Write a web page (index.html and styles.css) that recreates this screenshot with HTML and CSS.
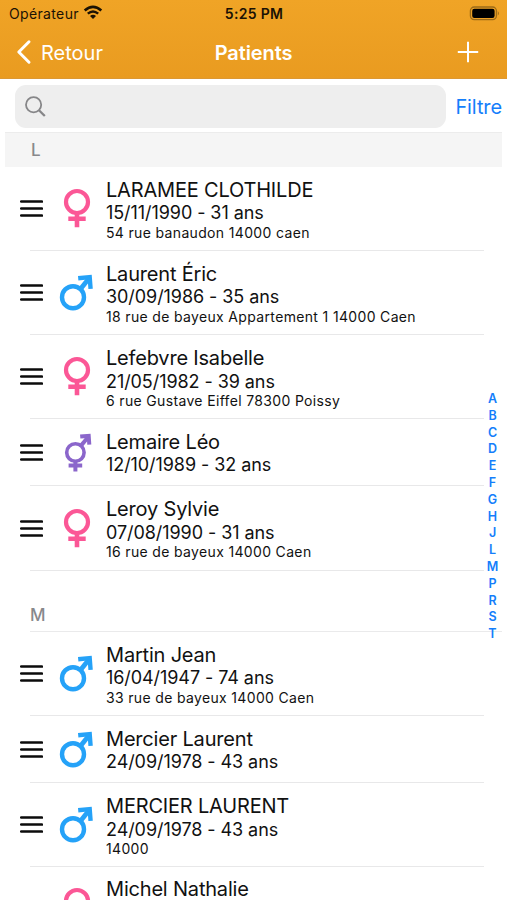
FILE: index.html
```
<!DOCTYPE html>
<html lang="fr">
<head>
<meta charset="utf-8">
<title>Patients</title>
<link rel="stylesheet" href="styles.css">
</head>
<body>
<svg class="symbols" width="0" height="0" aria-hidden="true">
  <symbol id="menu" viewBox="0 0 24 18"><path d="M2.2 1.6H23M2.2 8.6H23M2.2 15.6H23" stroke="#0b0b0b" stroke-width="2.5" stroke-linecap="round"/></symbol>
  <symbol id="female" viewBox="0 0 38 42" fill="none" stroke="#fb5796"><circle cx="19" cy="14" r="11" stroke-width="4.2"/><path d="M19 25V39.2M10.3 30.8H27.7" stroke-width="4.6"/></symbol>
  <symbol id="male" viewBox="0 0 38 42" fill="none" stroke="#25a2f8"><circle cx="15" cy="25.2" r="11" stroke-width="4.4"/><path d="M22.5 17L30.5 7" stroke-width="4.8"/><path d="M20.2 6.2L31.7 5.1L32.6 16.8" stroke-width="4.4"/></symbol>
  <symbol id="mixed" viewBox="0 0 38 42" fill="none" stroke="#8b66cb"><circle cx="17.4" cy="20.5" r="8.7" stroke-width="3.6"/><path d="M23 13.6L30 5.2M17.4 29.5V39.5M10.6 33.6H24.2" stroke-width="4"/><path d="M22.2 4.6L30.7 3.9L31.3 12.6" stroke-width="4"/></symbol>
</svg>
<header class="top">
  <div class="status">
    <div class="carrier"><span>Opérateur</span>
      <svg width="20" height="15" viewBox="0 0 20 15" fill="none" stroke="#1b1204"><path d="M1.7 5.5Q10 -1.9 18.3 5.5" stroke-width="2.6"/><path d="M4.8 8.7Q10 4.1 15.2 8.7" stroke-width="2.4"/><path d="M7 11.1Q10 8.4 13 11.1L10 14Z" fill="#1b1204" stroke="none"/></svg>
    </div>
    <span class="clock">5:25 PM</span>
    <svg class="battery" width="31" height="15" viewBox="0 0 31 15"><rect x="1.4" y="1" width="26" height="12.6" rx="3.8" fill="none" stroke="#9c6b18" stroke-width="1.3"/><rect x="3.2" y="2.7" width="22.4" height="9.2" rx="2.2"/><path d="M28.8 5Q31 7.3 28.8 9.6Z" fill="#9c6b18"/></svg>
  </div>
  <nav class="nav">
    <a class="back"><svg width="16" height="26" viewBox="0 0 16 26"><path d="M13 2.8L2.8 13L13 23.2" fill="none" stroke="#fff" stroke-width="3" stroke-linecap="round" stroke-linejoin="round"/></svg><span>Retour</span></a>
    <h1>Patients</h1>
    <svg class="add" width="22" height="22" viewBox="0 0 22 22"><path d="M11 .8V21.2M.8 11H21.2" stroke="#fff" stroke-width="2"/></svg>
  </nav>
</header>
<div class="tools">
  <div class="search"><svg width="22" height="22" viewBox="0 0 22 22" fill="none" stroke="#868688"><circle cx="9.6" cy="8.8" r="7.6" stroke-width="1.8"/><path d="M15 14.2L20.8 20" stroke-width="2.3"/></svg></div>
  <a class="filter">Filtre</a>
</div>
<main>
  <h2 class="first">L</h2>
  <ul>
    <li><svg class="menu"><use href="#menu"/></svg><svg class="sex"><use href="#female"/></svg><div><b>LARAMEE CLOTHILDE</b><p>15/11/1990 - 31 ans</p><small>54 rue banaudon 14000 caen</small></div></li>
    <li><svg class="menu"><use href="#menu"/></svg><svg class="sex"><use href="#male"/></svg><div><b>Laurent Éric</b><p>30/09/1986 - 35 ans</p><small>18 rue de bayeux Appartement 1 14000 Caen</small></div></li>
    <li><svg class="menu"><use href="#menu"/></svg><svg class="sex"><use href="#female"/></svg><div><b>Lefebvre Isabelle</b><p>21/05/1982 - 39 ans</p><small>6 rue Gustave Eiffel 78300 Poissy</small></div></li>
    <li><svg class="menu"><use href="#menu"/></svg><svg class="sex"><use href="#mixed"/></svg><div><b>Lemaire Léo</b><p>12/10/1989 - 32 ans</p></div></li>
    <li><svg class="menu"><use href="#menu"/></svg><svg class="sex"><use href="#female"/></svg><div><b>Leroy Sylvie</b><p>07/08/1990 - 31 ans</p><small>16 rue de bayeux 14000 Caen</small></div></li>
  </ul>
  <h2 class="next">M</h2>
  <ul>
    <li><svg class="menu"><use href="#menu"/></svg><svg class="sex"><use href="#male"/></svg><div><b>Martin Jean</b><p>16/04/1947 - 74 ans</p><small>33 rue de bayeux 14000 Caen</small></div></li>
    <li><svg class="menu"><use href="#menu"/></svg><svg class="sex"><use href="#male"/></svg><div><b>Mercier Laurent</b><p>24/09/1978 - 43 ans</p></div></li>
    <li><svg class="menu"><use href="#menu"/></svg><svg class="sex"><use href="#male"/></svg><div><b>MERCIER LAURENT</b><p>24/09/1978 - 43 ans</p><small>14000</small></div></li>
    <li class="cut"><svg class="menu"></svg><svg class="sex"><use href="#female" width="38" height="42"/></svg><div><b>Michel Nathalie</b></div></li>
  </ul>
</main>
<aside class="index"><i>A</i><i>B</i><i>C</i><i>D</i><i>E</i><i>F</i><i>G</i><i>H</i><i>J</i><i>L</i><i>M</i><i>P</i><i>R</i><i>S</i><i>T</i></aside>
</body>
</html>
```
FILE: styles.css
```
* { box-sizing: border-box; margin: 0; padding: 0; }
html, body { height: 900px; overflow: hidden; }
body { background: #fff; color: #111; font-family: Inter, "Liberation Sans", sans-serif; position: relative; }
.symbols { position: absolute; }
.top { height: 79px; background: linear-gradient(#f0a426, #e99b20); border-bottom: 1px solid #dc9833; }
.status { height: 27px; padding: 0 7px 0 9px; display: grid; grid-template-columns: 1fr auto 1fr; align-items: center; color: #1b1204; font-size: 14px; }
.carrier { display: flex; align-items: center; gap: 4px; letter-spacing: .35px; }
.carrier svg { margin-top: -2px; }
.clock { font-weight: 600; letter-spacing: .3px; transform: translateX(-.5px); }
.battery { justify-self: end; }
.nav { height: 51px; padding: 0 28px 0 16px; display: grid; grid-template-columns: 1fr auto 1fr; align-items: center; color: #fff; }
.back { display: flex; align-items: center; gap: 9px; font-size: 20px; }
.back svg { margin-top: -1px; }
h1 { font-size: 20px; font-weight: 600; letter-spacing: -.1px; transform: translateX(6px); }
.add { justify-self: end; margin-top: -1px; }
.tools { height: 53px; padding: 6px 5px 4px 15px; display: flex; align-items: center; justify-content: space-between; }
.search { width: 431px; height: 43px; border-radius: 11px; background: #eee; padding: 11px 9px; }
.filter { color: #147efb; font-size: 20px; letter-spacing: -.1px; }
h2 { color: #88888b; font-size: 17px; }
.first { height: 34.7px; margin: 0 5px; padding-left: 26px; line-height: 35px; background: #f5f5f5; border-top: 1px solid #ececec; font-weight: 500; }
.next { height: 61.2px; margin: 0 5px 0 30px; padding-top: 27px; line-height: 34px; border-bottom: 1px solid #eaeaeb; font-weight: 500; }
main { height: 768px; overflow: hidden; }
ul { list-style: none; }
li { position: relative; height: 67.2px; padding-left: 19px; display: flex; align-items: center; }
li:has(small) { height: 84.2px; }
li::after { content: ""; position: absolute; left: 30px; right: 23px; bottom: 0; height: 1px; background: #e8e8e9; }
.menu { width: 24px; height: 18px; flex: none; }
.sex { width: 38px; height: 42px; margin-left: 15px; flex: none; }
li > div { margin-left: 10px; white-space: nowrap; padding-top: 1.8px; }
b, li p, small { display: block; }
b { font-size: 20px; font-weight: 400; line-height: 23.5px; letter-spacing: -.19px; }
li p { font-size: 18px; line-height: 22.3px; letter-spacing: -.07px; }
small { font-size: 14px; line-height: 16px; letter-spacing: .34px; padding-top: .2px; }
li.cut { height: 32px; align-items: flex-start; }
.cut::after { display: none; }
.cut > div { padding-top: 12px; }
.cut b { line-height: 20px; }
.cut .sex { height: 14px; margin-top: 20px; }
.index { position: absolute; right: 5px; top: 391px; width: 19px; display: flex; flex-direction: column; align-items: center; color: #147efb; }
i { font: 600 12.5px/16.8px Inter, sans-serif; }
```
